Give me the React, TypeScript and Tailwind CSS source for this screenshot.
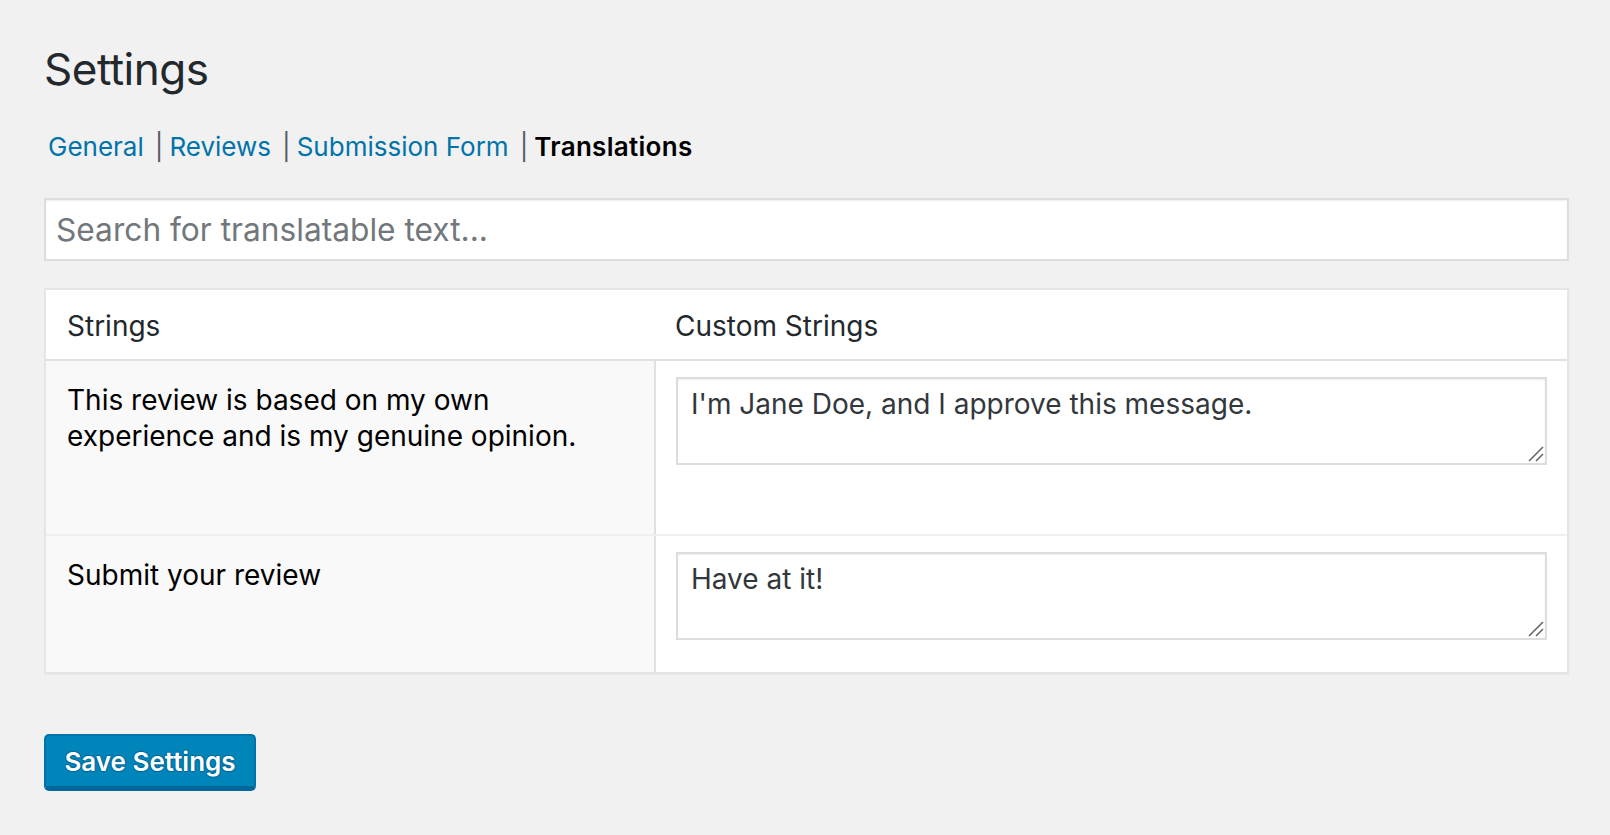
import React from 'react';

// Translations tab of the plugin settings page (WP admin look, scaled 2x).

const tabs = [
  { label: 'General', current: false },
  { label: 'Reviews', current: false },
  { label: 'Submission Form', current: false },
  { label: 'Translations', current: true },
];

const rows = [
  {
    original: 'This review is based on my own experience and is my genuine opinion.',
    custom: "I'm Jane Doe, and I approve this message.",
    height: 'h-[173px]',
  },
  {
    original: 'Submit your review',
    custom: 'Have at it!',
    height: 'h-[136px]',
  },
];

function ResizeGrip() {
  return (
    <svg
      className="pointer-events-none absolute right-[3px] bottom-[3px]"
      width="16"
      height="16"
      viewBox="0 0 16 16"
      fill="none"
      stroke="#666"
      strokeWidth="1.6"
    >
      <path d="M1 15L15 1" />
      <path d="M8 15L15 8" />
    </svg>
  );
}

export default function App() {
  return (
    <div className="min-h-screen bg-[#f1f1f1] pl-[44px] pr-[41px] pt-[43px] pb-10 font-['Inter','Noto_Sans',sans-serif] text-[#23282d]">
      <h1 className="text-[44px] leading-[53px] font-normal tracking-[-0.5px]">Settings</h1>

      <ul className="mt-[35px] flex items-center pl-[4px] text-[26px] leading-[32px]">
        {tabs.map((tab, i) => (
          <li key={tab.label} className="flex items-center">
            {tab.current ? (
              <span className="font-semibold tracking-[0.3px] text-black">{tab.label}</span>
            ) : (
              <a href="#" className="text-[#0073aa]">
                {tab.label}
              </a>
            )}
            {i < tabs.length - 1 && <span className="ml-[11px] mr-[6px] text-[#555d66]">|</span>}
          </li>
        ))}
      </ul>

      <div className="mt-[35px]">
        <input
          type="text"
          placeholder="Search for translatable text..."
          className="h-[63px] w-full border-2 border-[#dddddd] bg-white px-[10px] text-[31.7px] text-[#32373c] shadow-[inset_0_1px_2px_rgba(0,0,0,0.07)] outline-none placeholder:text-[#72777c]"
        />
      </div>

      <div className="mt-[27px] border-2 border-[#e5e5e5] bg-white shadow-[0_1px_1px_rgba(0,0,0,0.04)]">
        <div className="flex border-b-2 border-[#e1e1e1] text-[28px] leading-[36px]">
          <div className="w-[608px] px-[21px] pt-[18px] pb-[15px]">Strings</div>
          <div className="flex-1 pl-[21px] pt-[18px] pb-[15px]">Custom Strings</div>
        </div>

        {rows.map((row, i) => (
          <div
            key={row.original}
            className={`flex text-[28px] leading-[36px] ${i < rows.length - 1 ? 'border-b-2 border-[#f0f0f0]' : ''}`}
          >
            <div className={`${row.height} w-[608px] bg-[#f9f9f9] px-[21px] pt-[21px] text-black`}>
              <p className="max-w-[530px]">{row.original}</p>
            </div>
            <div className="w-[2px] bg-[#e1e1e1]" />
            <div className="flex-1 px-[20px] pt-[16px]">
              <div className="relative">
                <textarea
                  defaultValue={row.custom}
                  className="block h-[88px] w-full resize-none border-2 border-[#dddddd] bg-white px-[13px] pt-[7px] text-[28px] leading-[36px] text-[#32373c] shadow-[inset_0_1px_2px_rgba(0,0,0,0.07)] outline-none"
                />
                <ResizeGrip />
              </div>
            </div>
          </div>
        ))}
      </div>

      <button
        type="button"
        className="mt-[60px] h-[57px] w-[212px] rounded-[5px] border-2 border-b-[5px] border-[#0073aa] border-b-[#006799] bg-[#0085ba] text-[26px] font-semibold text-white [text-shadow:0_-1px_1px_#006799,1px_0_1px_#006799,0_1px_1px_#006799,-1px_0_1px_#006799]"
      >
        Save Settings
      </button>
    </div>
  );
}
